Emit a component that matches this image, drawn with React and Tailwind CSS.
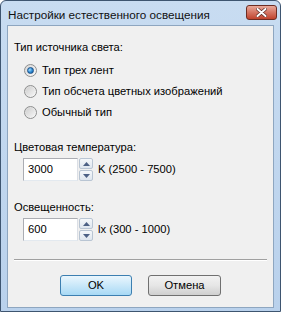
import { useState } from "react";

const font = { fontFamily: '"Segoe UI", "Liberation Sans", Arial, sans-serif' };

function Radio({ checked, label, onClick }) {
  return (
    <div className="flex h-[21px] items-center" onClick={onClick}>
      <div className="ml-[10px] flex h-[13px] w-[13px] items-center justify-center rounded-full border border-[#8e8f8f] bg-gradient-to-br from-[#d6d6d6] to-[#fbfbfb]">
        {checked ? (
          <div className="h-[7px] w-[7px] rounded-full border border-[#1b4f87] bg-[radial-gradient(circle_at_35%_35%,#9fdcff,#2a86d0_55%,#155c9e)]" />
        ) : (
          <div className="h-[9px] w-[9px] rounded-full bg-gradient-to-br from-[#cfcfcf] to-[#f5f5f5]" />
        )}
      </div>
      <span className="ml-[5px] text-[11.2px] text-black">{label}</span>
    </div>
  );
}

function Spin({ value, unit }) {
  return (
    <div className="ml-[9px] flex h-[23px] items-center">
      <div className="flex h-[23px] w-[55px] items-center border border-[#abadb3] border-b-[#e3e9ef] border-r-[#dbdfe6] bg-white pl-[4px] text-[11.2px] text-black">
        {value}
      </div>
      <div className="ml-[1px] flex h-[23px] w-[14px] flex-col gap-[1px]">
        <div className="flex h-[11px] items-center justify-center rounded-[2px] border border-[#b9c5d3] bg-gradient-to-b from-[#f5f8fb] to-[#dfe6ee]">
          <svg width="7" height="4" viewBox="0 0 7 4">
            <path d="M3.5 0 L7 4 L0 4 Z" fill="#4d6185" />
          </svg>
        </div>
        <div className="flex h-[11px] items-center justify-center rounded-[2px] border border-[#b9c5d3] bg-gradient-to-b from-[#f5f8fb] to-[#dfe6ee]">
          <svg width="7" height="4" viewBox="0 0 7 4">
            <path d="M0 0 L7 0 L3.5 4 Z" fill="#4d6185" />
          </svg>
        </div>
      </div>
      <span className="ml-[5px] text-[11.2px] text-black">{unit}</span>
    </div>
  );
}

export default function App() {
  const [source, setSource] = useState(0);

  return (
    <div
      className="flex h-[312px] w-[281px] flex-col rounded-t-[6px] border border-[#3e5570] bg-gradient-to-b from-[#c8dcf1] to-[#b9d1ec] leading-[15px]"
      style={font}
    >
      {/* title bar */}
      <div className="flex h-[24px] items-start justify-between pl-[7px] pr-[3px] pt-[4px]">
        <span className="mt-[2px] text-[11.7px] text-[#111]">
          Настройки естественного освещения
        </span>
        <div className="flex h-[15px] w-[31px] items-center justify-center rounded-[3px] border border-[#6d2d23] bg-gradient-to-b from-[#e9a99a] via-[#d47462] to-[#c0422c]">
          <svg width="11" height="9" viewBox="0 0 11 9">
            <path d="M1.5 1 L9.5 8 M9.5 1 L1.5 8" stroke="#5a2a24" strokeWidth="3.4" strokeLinecap="round" />
            <path d="M1.5 1 L9.5 8 M9.5 1 L1.5 8" stroke="#fff" strokeWidth="2" strokeLinecap="round" />
          </svg>
        </div>
      </div>

      {/* client area */}
      <div className="mx-[6px] mb-[3px] flex flex-1 flex-col border border-[#8ea6c0] bg-[#f0f0f0] pl-[6px] pr-[6px] pt-[14px]">
        <div className="text-[11.2px] text-black">Тип источника света:</div>
        <div className="mt-[5px] flex flex-col">
          <Radio checked={source === 0} label="Тип трех лент" onClick={() => setSource(0)} />
          <Radio checked={source === 1} label="Тип обсчета цветных изображений" onClick={() => setSource(1)} />
          <Radio checked={source === 2} label="Обычный тип" onClick={() => setSource(2)} />
        </div>

        <div className="mt-[17px] text-[11.2px] text-black">Цветовая температура:</div>
        <div className="mt-[3px]">
          <Spin value="3000" unit="K (2500 - 7500)" />
        </div>

        <div className="mt-[19px] text-[11.2px] text-black">Освещенность:</div>
        <div className="mt-[3px]">
          <Spin value="600" unit="lx (300 - 1000)" />
        </div>

        <div className="mt-[18px] h-[2px] border-t border-[#a0a0a0] border-b border-b-white" />

        <div className="mt-[14px] flex justify-center gap-[16px]">
          <button className="h-[21px] w-[72px] rounded-[3px] border border-[#3c7fb1] bg-gradient-to-b from-[#eaf6fd] to-[#a7d9f5] text-[11.2px] text-black">
            OK
          </button>
          <button className="h-[21px] w-[73px] rounded-[3px] border border-[#707070] bg-gradient-to-b from-[#f2f2f2] via-[#e6e6e6] to-[#cfcfcf] text-[11.2px] text-black">
            Отмена
          </button>
        </div>
      </div>
    </div>
  );
}
